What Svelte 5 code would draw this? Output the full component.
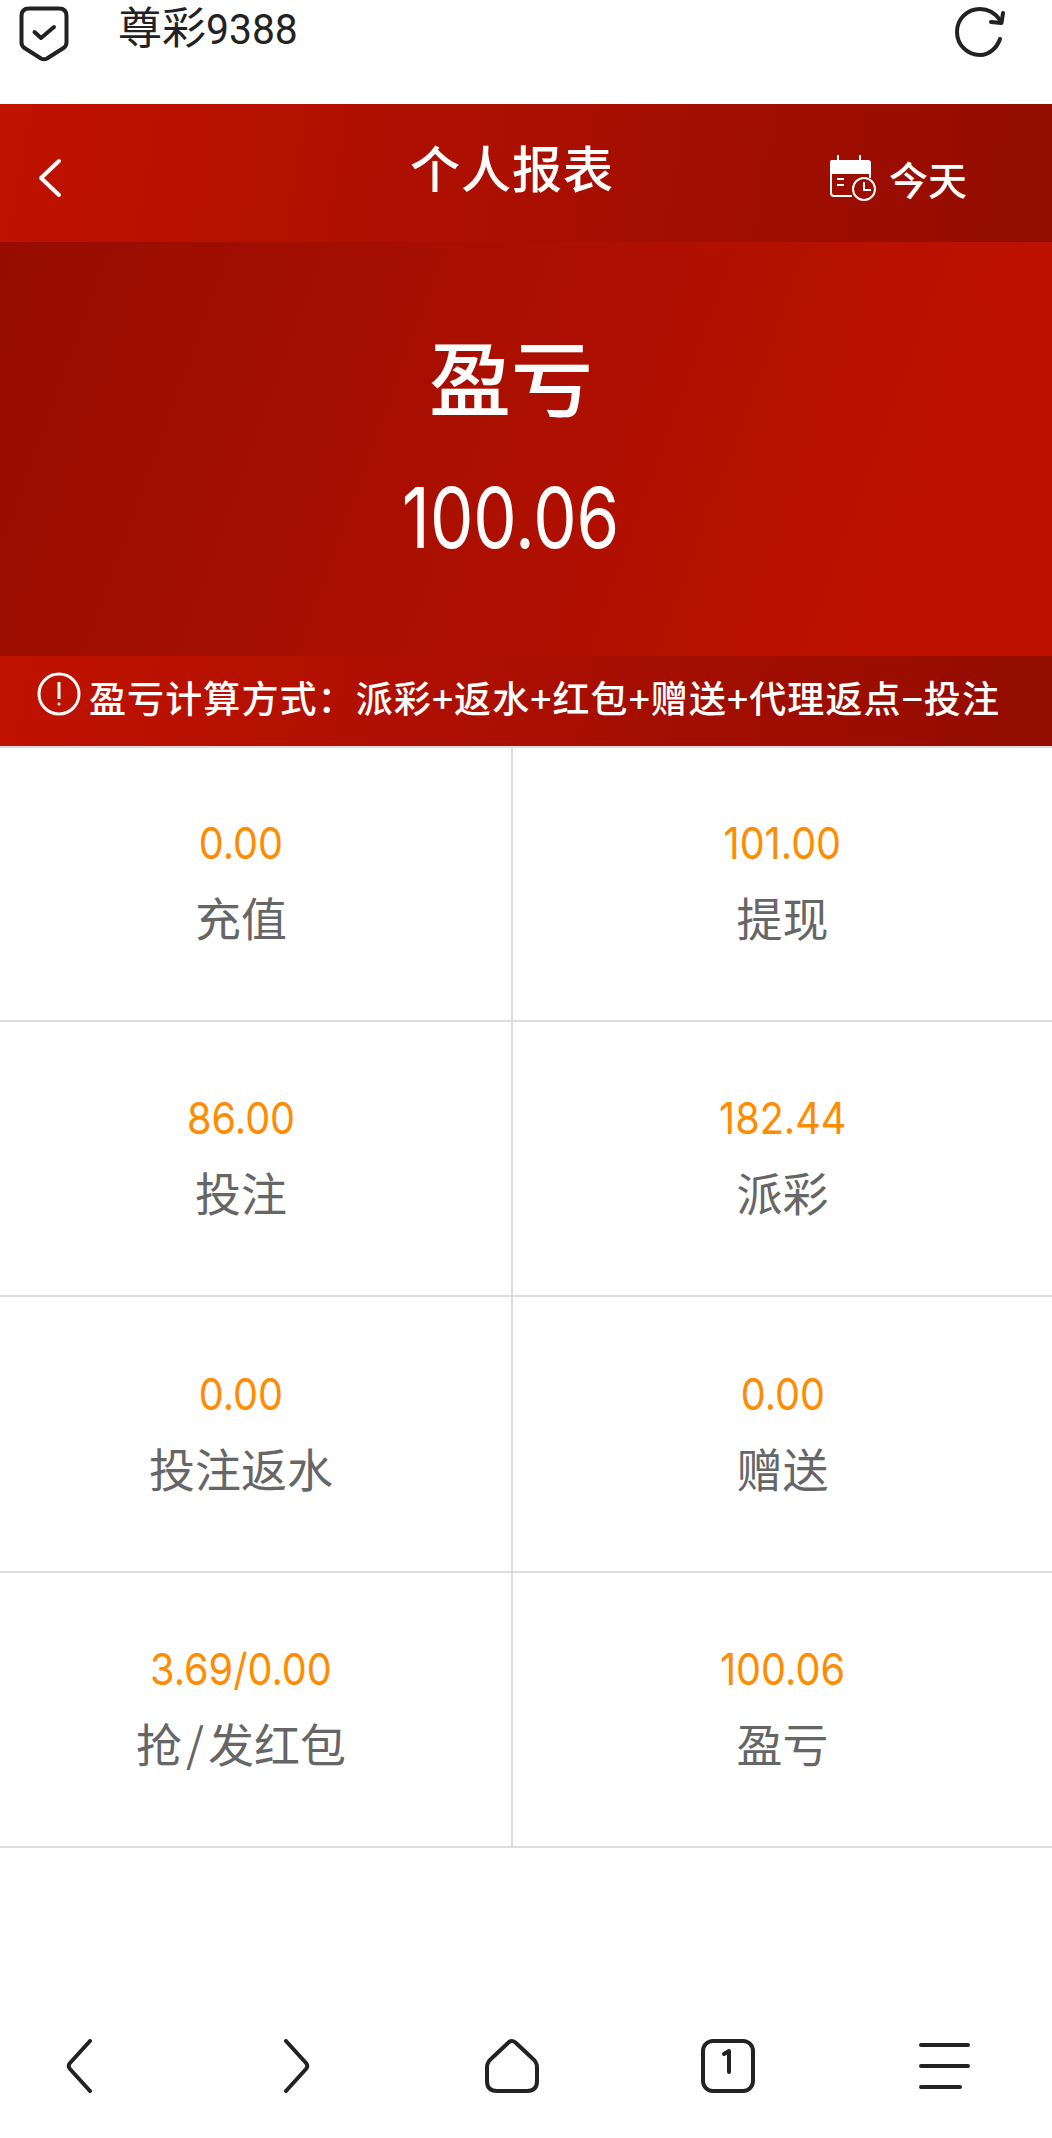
<script>
  const cells = [
    { v: '0.00', k: ['充值'] }, { v: '101.00', k: ['提现'] },
    { v: '86.00', k: ['投注'] }, { v: '182.44', k: ['派彩'] },
    { v: '0.00', k: ['投注返水'] }, { v: '0.00', k: ['赠送'] },
    { v: '3.69/0.00', k: ['抢', '发红包'] }, { v: '100.06', k: ['盈亏'] }
  ];
</script>

<div class="page">
  <div class="topbar">
    <svg class="shield" width="50" height="56" viewBox="0 0 50 56" fill="none" stroke="#222" stroke-linecap="round" stroke-linejoin="round">
      <path stroke-width="4" d="M10 2.500H40Q47.500 2.500 47.500 10V36.500Q47.500 40 44.500 42L28 52.500Q25 54 22 52.500L5.500 42Q2.500 40 2.500 36.500V10Q2.500 2.500 10 2.500Z"/>
      <path stroke-width="4" d="M15.500 26L22 32L35 21"/>
    </svg>
    <div class="sitename">尊彩<span class="latin">9388</span></div>
    <svg class="refresh" width="52" height="52" viewBox="0 0 52 52" fill="none" stroke="#222" stroke-width="4" stroke-linecap="round" stroke-linejoin="round">
      <path d="M46 33C43 42 35 49 26 49C13 49 3 38.500 3 26C3 13 13 3 26 3C34 3 41 7 46 14"/>
      <path d="M49 7L47.500 17L37 16"/>
    </svg>
  </div>

  <header class="head">
    <svg class="back" width="26" height="40" viewBox="0 0 26 40" fill="none" stroke="#fff" stroke-width="4" stroke-linecap="round" stroke-linejoin="round">
      <path d="M21 3L3 20L21 37"/>
    </svg>
    <h1>个人报表</h1>
    <div class="today">
      <svg width="48" height="46" viewBox="0 0 48 46" fill="none" stroke="#fff" stroke-width="2">
        <path fill="#fff" stroke="none" d="M3 5H8V0H10V5H30V0H32V5H39Q42 5 42 8V19H1V7Q1 5 3 5Z"/>
        <path d="M2 19V38Q2 41 5 41H23M41 19V23"/>
        <path d="M8 24H15M8 30H15"/>
        <circle cx="35" cy="34" r="11"/>
        <path d="M35 27V35H42"/>
      </svg>
      <span>今天</span>
    </div>
  </header>

  <section class="hero">
    <div class="hero-title">盈亏</div>
    <div class="hero-value"><span class="num">100.06</span></div>
  </section>

  <div class="note">
    <svg width="44" height="44" viewBox="0 0 44 44" fill="none" stroke="#fff" stroke-width="3">
      <circle cx="22" cy="22" r="20"/>
      <path d="M22 10V27"/>
      <circle cx="22" cy="32" r="1.500" fill="#fff" stroke="none"/>
    </svg>
    <span>盈亏计算方式：派彩+返水+红包+赠送+代理返点−投注</span>
  </div>

  <div class="grid">
    {#each cells as c, i}
      <div class="cell" class:left={i % 2 === 0}>
        <div class="val"><span class="num">{c.v}</span></div>
        <div class="key">{#each c.k as part, j}{#if j > 0}<span class="slash">/</span>{/if}{part}{/each}</div>
      </div>
    {/each}
  </div>

  <nav class="bottom">
    <svg width="54" height="54" viewBox="0 0 54 54" fill="none" stroke="#222" stroke-width="4" stroke-linecap="round" stroke-linejoin="round">
      <path d="M37 2L17 24Q14.500 27 17 30L37 52"/>
    </svg>
    <svg width="54" height="54" viewBox="0 0 54 54" fill="none" stroke="#222" stroke-width="4" stroke-linecap="round" stroke-linejoin="round">
      <path d="M17 2L37 24Q39.500 27 37 30L17 52"/>
    </svg>
    <svg width="54" height="54" viewBox="0 0 54 54" fill="none" stroke="#222" stroke-width="4" stroke-linejoin="round">
      <path d="M23 4Q27 0 31 4L47 19Q52 23 52 28V42Q52 52 42 52H12Q2 52 2 42V28Q2 23 7 19Z"/>
    </svg>
    <svg width="54" height="54" viewBox="0 0 54 54" fill="none" stroke="#222" stroke-width="4" stroke-linecap="round" stroke-linejoin="round">
      <rect x="2" y="2" width="50" height="50" rx="10"/>
      <path d="M23 15L28 12V33"/>
    </svg>
    <svg width="54" height="54" viewBox="0 0 54 54" fill="none" stroke="#222" stroke-width="4" stroke-linecap="round">
      <path d="M4 6H51M4 27H51M4 48H43"/>
    </svg>
  </nav>
</div>

<style>
  :global(body) { margin: 0; background: #fff; }
  .page {
    width: 1052px;
    height: 2138px;
    display: flex;
    flex-direction: column;
    font-family: "Noto Sans CJK SC", "Noto Sans", sans-serif;
    overflow: hidden;
  }
  .latin {
    display: inline-block;
    font-family: Roboto, "Noto Sans CJK SC", sans-serif;
    transform-origin: left;
    transform: scaleX(0.95);
    font-size: 43px;
  }
  .num {
    display: inline-block;
    font-family: Inter, Roboto, sans-serif;
    font-weight: 400;
    transform: scaleX(0.9);
  }
  .slash { padding: 0 4px; }
  .topbar {
    height: 104px;
    flex: none;
    display: flex;
    align-items: flex-start;
    box-sizing: border-box;
    padding: 6px 46px 0 19px;
  }
  .sitename {
    margin-left: 49px;
    margin-top: -3px;
    font-size: 44px;
    line-height: 44px;
    color: #222;
    white-space: nowrap;
  }
  .refresh { margin-left: auto; }
  .head {
    height: 138px;
    flex: none;
    display: grid;
    grid-template-columns: 1fr auto 1fr;
    align-items: center;
    box-sizing: border-box;
    padding: 0 66px 0 38px;
    background: linear-gradient(100deg, #c01200, #930c00);
    color: #fff;
  }
  .back { margin-top: 10px; }
  h1 {
    margin: -14px 0 0;
    font-size: 50px;
    font-weight: 500;
    line-height: 70px;
    letter-spacing: 1px;
  }
  .today {
    justify-self: end;
    display: flex;
    align-items: center;
    gap: 12px;
    font-size: 39px;
    font-weight: 500;
    margin: 10px 19px 0 0;
  }
  .hero {
    height: 414px;
    flex: none;
    display: flex;
    flex-direction: column;
    align-items: center;
    box-sizing: border-box;
    padding: 78px 30px 0 0;
    background: linear-gradient(110deg, #960d00, #bc1100 85%);
    color: #fff;
  }
  .hero-title {
    font-size: 82px;
    font-weight: 500;
    line-height: 110px;
  }
  .hero-value {
    font-size: 84px;
    line-height: 110px;
    margin-top: 27px;
  }
  .hero-value .num { transform: scaleX(0.82); }
  .note {
    height: 90px;
    flex: none;
    display: flex;
    align-items: center;
    box-sizing: border-box;
    padding: 0 0 8px 37px;
    gap: 8px;
    background: linear-gradient(100deg, #c01200, #930c00);
    color: #fff;
    font-size: 37px;
    font-weight: 500;
    letter-spacing: 1.1px;
    white-space: nowrap;
  }
  .note svg { margin-top: -7px; flex: none; }
  .grid {
    display: grid;
    grid-template-columns: 513px 539px;
    box-shadow: inset 0 2px #ddd;
    flex: none;
  }
  .cell {
    height: 275.500px;
    box-sizing: border-box;
    border-bottom: 2px solid #ddd;
    display: flex;
    flex-direction: column;
    align-items: center;
    justify-content: center;
    padding-bottom: 8px;
  }
  .cell.left {
    border-right: 2px solid #ddd;
    padding-right: 29px;
  }
  .val {
    color: #ff8c00;
    font-size: 44px;
    line-height: 60px;
    white-space: nowrap;
  }
  .key {
    color: #666;
    font-size: 46px;
    line-height: 64px;
    margin-top: 11px;
    white-space: nowrap;
  }
  .bottom {
    margin-top: auto;
    height: 98px;
    box-sizing: border-box;
    padding: 0 0 46px 53px;
    display: flex;
    align-items: center;
    gap: 162px;
    flex: none;
  }
</style>
